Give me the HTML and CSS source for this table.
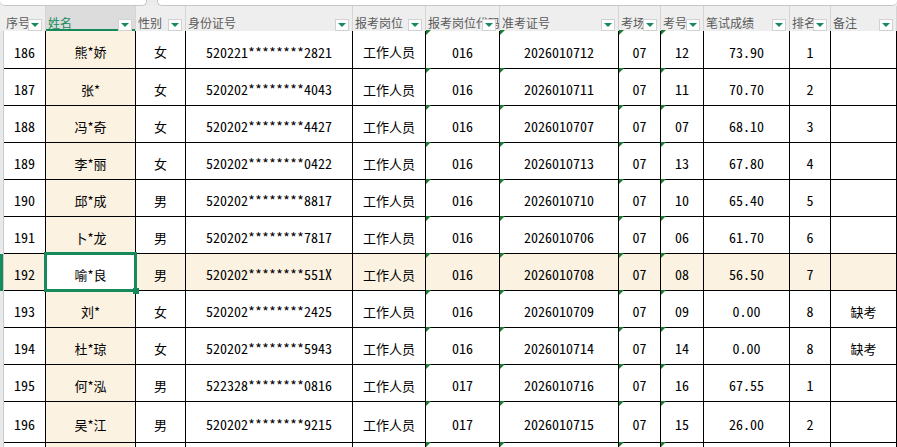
FILE: index.html
```html
<!DOCTYPE html>
<html lang="zh-CN">
<head>
<meta charset="utf-8">
<title>成绩表</title>
<link rel="stylesheet" href="styles.css">
</head>
<body>
<div class="sheet">
  <div class="top"><div class="tab t1"></div><div class="tab t2"></div></div>
  <div class="r h">
    <div class="hc hrh"></div>
    <div class="hc">序号<span class="dd"></span></div>
    <div class="hc hsel">姓名<span class="dd"></span></div>
    <div class="hc">性别<span class="dd"></span></div>
    <div class="hc">身份证号<span class="dd"></span></div>
    <div class="hc">报考岗位<span class="dd"></span></div>
    <div class="hc">报考岗位代码<span class="dd"></span></div>
    <div class="hc">准考证号<span class="dd"></span></div>
    <div class="hc">考场<span class="dd"></span></div>
    <div class="hc">考号<span class="dd"></span></div>
    <div class="hc">笔试成绩<span class="dd"></span></div>
    <div class="hc">排名<span class="dd"></span></div>
    <div class="hc">备注<span class="dd"></span></div>
  </div>

  <div class="r d first">
    <div class="rh"></div><div class="c">186</div><div class="c t nm">熊*娇</div><div class="c t">女</div><div class="c">520221********2821</div><div class="c t">工作人员</div><div class="c tri">016</div><div class="c tri">2026010712</div><div class="c tri">07</div><div class="c tri">12</div><div class="c">73.90</div><div class="c">1</div><div class="c t"></div>
  </div>
  <div class="r d">
    <div class="rh"></div><div class="c">187</div><div class="c t nm">张*</div><div class="c t">女</div><div class="c">520202********4043</div><div class="c t">工作人员</div><div class="c tri">016</div><div class="c tri">2026010711</div><div class="c tri">07</div><div class="c tri">11</div><div class="c">70.70</div><div class="c">2</div><div class="c t"></div>
  </div>
  <div class="r d">
    <div class="rh"></div><div class="c">188</div><div class="c t nm">冯*奇</div><div class="c t">女</div><div class="c">520202********4427</div><div class="c t">工作人员</div><div class="c tri">016</div><div class="c tri">2026010707</div><div class="c tri">07</div><div class="c tri">07</div><div class="c">68.10</div><div class="c">3</div><div class="c t"></div>
  </div>
  <div class="r d">
    <div class="rh"></div><div class="c">189</div><div class="c t nm">李*丽</div><div class="c t">女</div><div class="c">520202********0422</div><div class="c t">工作人员</div><div class="c tri">016</div><div class="c tri">2026010713</div><div class="c tri">07</div><div class="c tri">13</div><div class="c">67.80</div><div class="c">4</div><div class="c t"></div>
  </div>
  <div class="r d">
    <div class="rh"></div><div class="c">190</div><div class="c t nm">邱*成</div><div class="c t">男</div><div class="c">520202********8817</div><div class="c t">工作人员</div><div class="c tri">016</div><div class="c tri">2026010710</div><div class="c tri">07</div><div class="c tri">10</div><div class="c">65.40</div><div class="c">5</div><div class="c t"></div>
  </div>
  <div class="r d">
    <div class="rh"></div><div class="c">191</div><div class="c t nm">卜*龙</div><div class="c t">男</div><div class="c">520202********7817</div><div class="c t">工作人员</div><div class="c tri">016</div><div class="c tri">2026010706</div><div class="c tri">07</div><div class="c tri">06</div><div class="c">61.70</div><div class="c">6</div><div class="c t"></div>
  </div>
  <div class="r d sel">
    <div class="rh"></div><div class="c">192</div><div class="c t nm act">喻*良<span class="hdl"></span></div><div class="c t">男</div><div class="c">520202********551X</div><div class="c t">工作人员</div><div class="c tri">016</div><div class="c tri">2026010708</div><div class="c tri">07</div><div class="c tri">08</div><div class="c">56.50</div><div class="c">7</div><div class="c t"></div>
  </div>
  <div class="r d">
    <div class="rh"></div><div class="c">193</div><div class="c t nm">刘*</div><div class="c t">女</div><div class="c">520202********2425</div><div class="c t">工作人员</div><div class="c tri">016</div><div class="c tri">2026010709</div><div class="c tri">07</div><div class="c tri">09</div><div class="c">0.00</div><div class="c">8</div><div class="c t">缺考</div>
  </div>
  <div class="r d">
    <div class="rh"></div><div class="c">194</div><div class="c t nm">杜*琼</div><div class="c t">女</div><div class="c">520202********5943</div><div class="c t">工作人员</div><div class="c tri">016</div><div class="c tri">2026010714</div><div class="c tri">07</div><div class="c tri">14</div><div class="c">0.00</div><div class="c">8</div><div class="c t">缺考</div>
  </div>
  <div class="r d">
    <div class="rh"></div><div class="c">195</div><div class="c t nm">何*泓</div><div class="c t">男</div><div class="c">522328********0816</div><div class="c t">工作人员</div><div class="c tri">017</div><div class="c tri">2026010716</div><div class="c tri">07</div><div class="c tri">16</div><div class="c">67.55</div><div class="c">1</div><div class="c t"></div>
  </div>
  <div class="r d last">
    <div class="rh"></div><div class="c">196</div><div class="c t nm">吴*江</div><div class="c t">男</div><div class="c">520202********9215</div><div class="c t">工作人员</div><div class="c tri">017</div><div class="c tri">2026010715</div><div class="c tri">07</div><div class="c tri">15</div><div class="c">26.00</div><div class="c">2</div><div class="c t"></div>
  </div>
  <div class="r d">
    <div class="rh"></div><div class="c"></div><div class="c t nm"></div><div class="c t"></div><div class="c"></div><div class="c t"></div><div class="c tri"></div><div class="c tri"></div><div class="c tri"></div><div class="c tri"></div><div class="c"></div><div class="c"></div><div class="c t"></div>
  </div>
</div>
</body>
</html>
```
FILE: styles.css
```css
html, body {
  margin: 0;
  padding: 0;
  background: #ffffff;
  overflow: hidden;
}
body {
  font-family: "Noto Sans CJK SC", "DejaVu Sans", sans-serif;
  color: #000;
}
.sheet {
  width: 897px;
  height: 447px;
  overflow: hidden;
}
.top {
  display: flex;
  gap: 10px;
  height: 6px;
  background: #ececec;
}
.tab {
  height: 5px;
  background: #fff;
  border: 1px solid #c6c6c6;
  border-top: 0;
  border-radius: 0 0 5px 5px;
}
.t1 { width: 146px; border-left: 0; }
.t2 { flex: 1; border-right: 0; }
.r {
  display: grid;
  grid-template-columns: 4px 42px 90px 50px 167px 73px 74px 119px 42px 43px 86px 41px 66px;
}
.h {
  height: 25px;
  background: #eeeeee;
}
.hc {
  position: relative;
  box-sizing: border-box;
  border-right: 1px solid #d4d4d4;
  overflow: hidden;
  white-space: nowrap;
  font-size: 12px;
  line-height: 14px;
  color: #5a5a5a;
  display: flex;
  align-items: flex-end;
  padding: 0 0 1px 2px;
}
.hrh { border-right: 0; padding: 0; }
.hsel {
  background: #dcdcdc;
  color: #178a5c;
  box-shadow: inset 0 -2px 0 #178a5c;
}
.dd {
  position: absolute;
  right: 3px;
  bottom: 0;
  width: 14px;
  height: 12px;
  box-sizing: border-box;
  background: #ffffff;
  border: 1px solid #d2d2d2;
  display: flex;
  align-items: center;
  justify-content: center;
}
.dd::after {
  content: "";
  border-left: 4px solid transparent;
  border-right: 4px solid transparent;
  border-top: 4px solid #178a5c;
}
.d { height: 37px; }
.d.first { height: 38px; }
.d.last { height: 41px; }
.rh {
  background: #e9e9e9;
  border-right: 1px solid #cbcbcb;
}
.c {
  position: relative;
  box-sizing: border-box;
  border-right: 1px solid #000;
  border-bottom: 1px solid #000;
  display: flex;
  align-items: center;
  justify-content: center;
  padding-top: 4px;
  font-family: "Noto Sans Mono CJK SC", "Liberation Mono", monospace;
  font-size: 14px;
  white-space: nowrap;
}
.c.t {
  font-family: "Noto Sans CJK SC", sans-serif;
  font-size: 13px;
}
.nm { background: #fbf2e2; }
.sel .c { background: #fbf2e2; }
.sel .rh { box-shadow: inset 3px 0 0 #178a5c; }
.sel .c.act { background: #ffffff; }
.act::after {
  content: "";
  position: absolute;
  top: -2px;
  left: -2px;
  right: -2px;
  bottom: -2px;
  border: 3px solid #178a5c;
  z-index: 2;
}
.hdl {
  position: absolute;
  right: -4px;
  bottom: -4px;
  width: 6px;
  height: 6px;
  background: #178a5c;
  z-index: 3;
}
.tri::before {
  content: "";
  position: absolute;
  top: -1px;
  left: 0;
  border-top: 5px solid #1d7b34;
  border-right: 5px solid transparent;
}
```
